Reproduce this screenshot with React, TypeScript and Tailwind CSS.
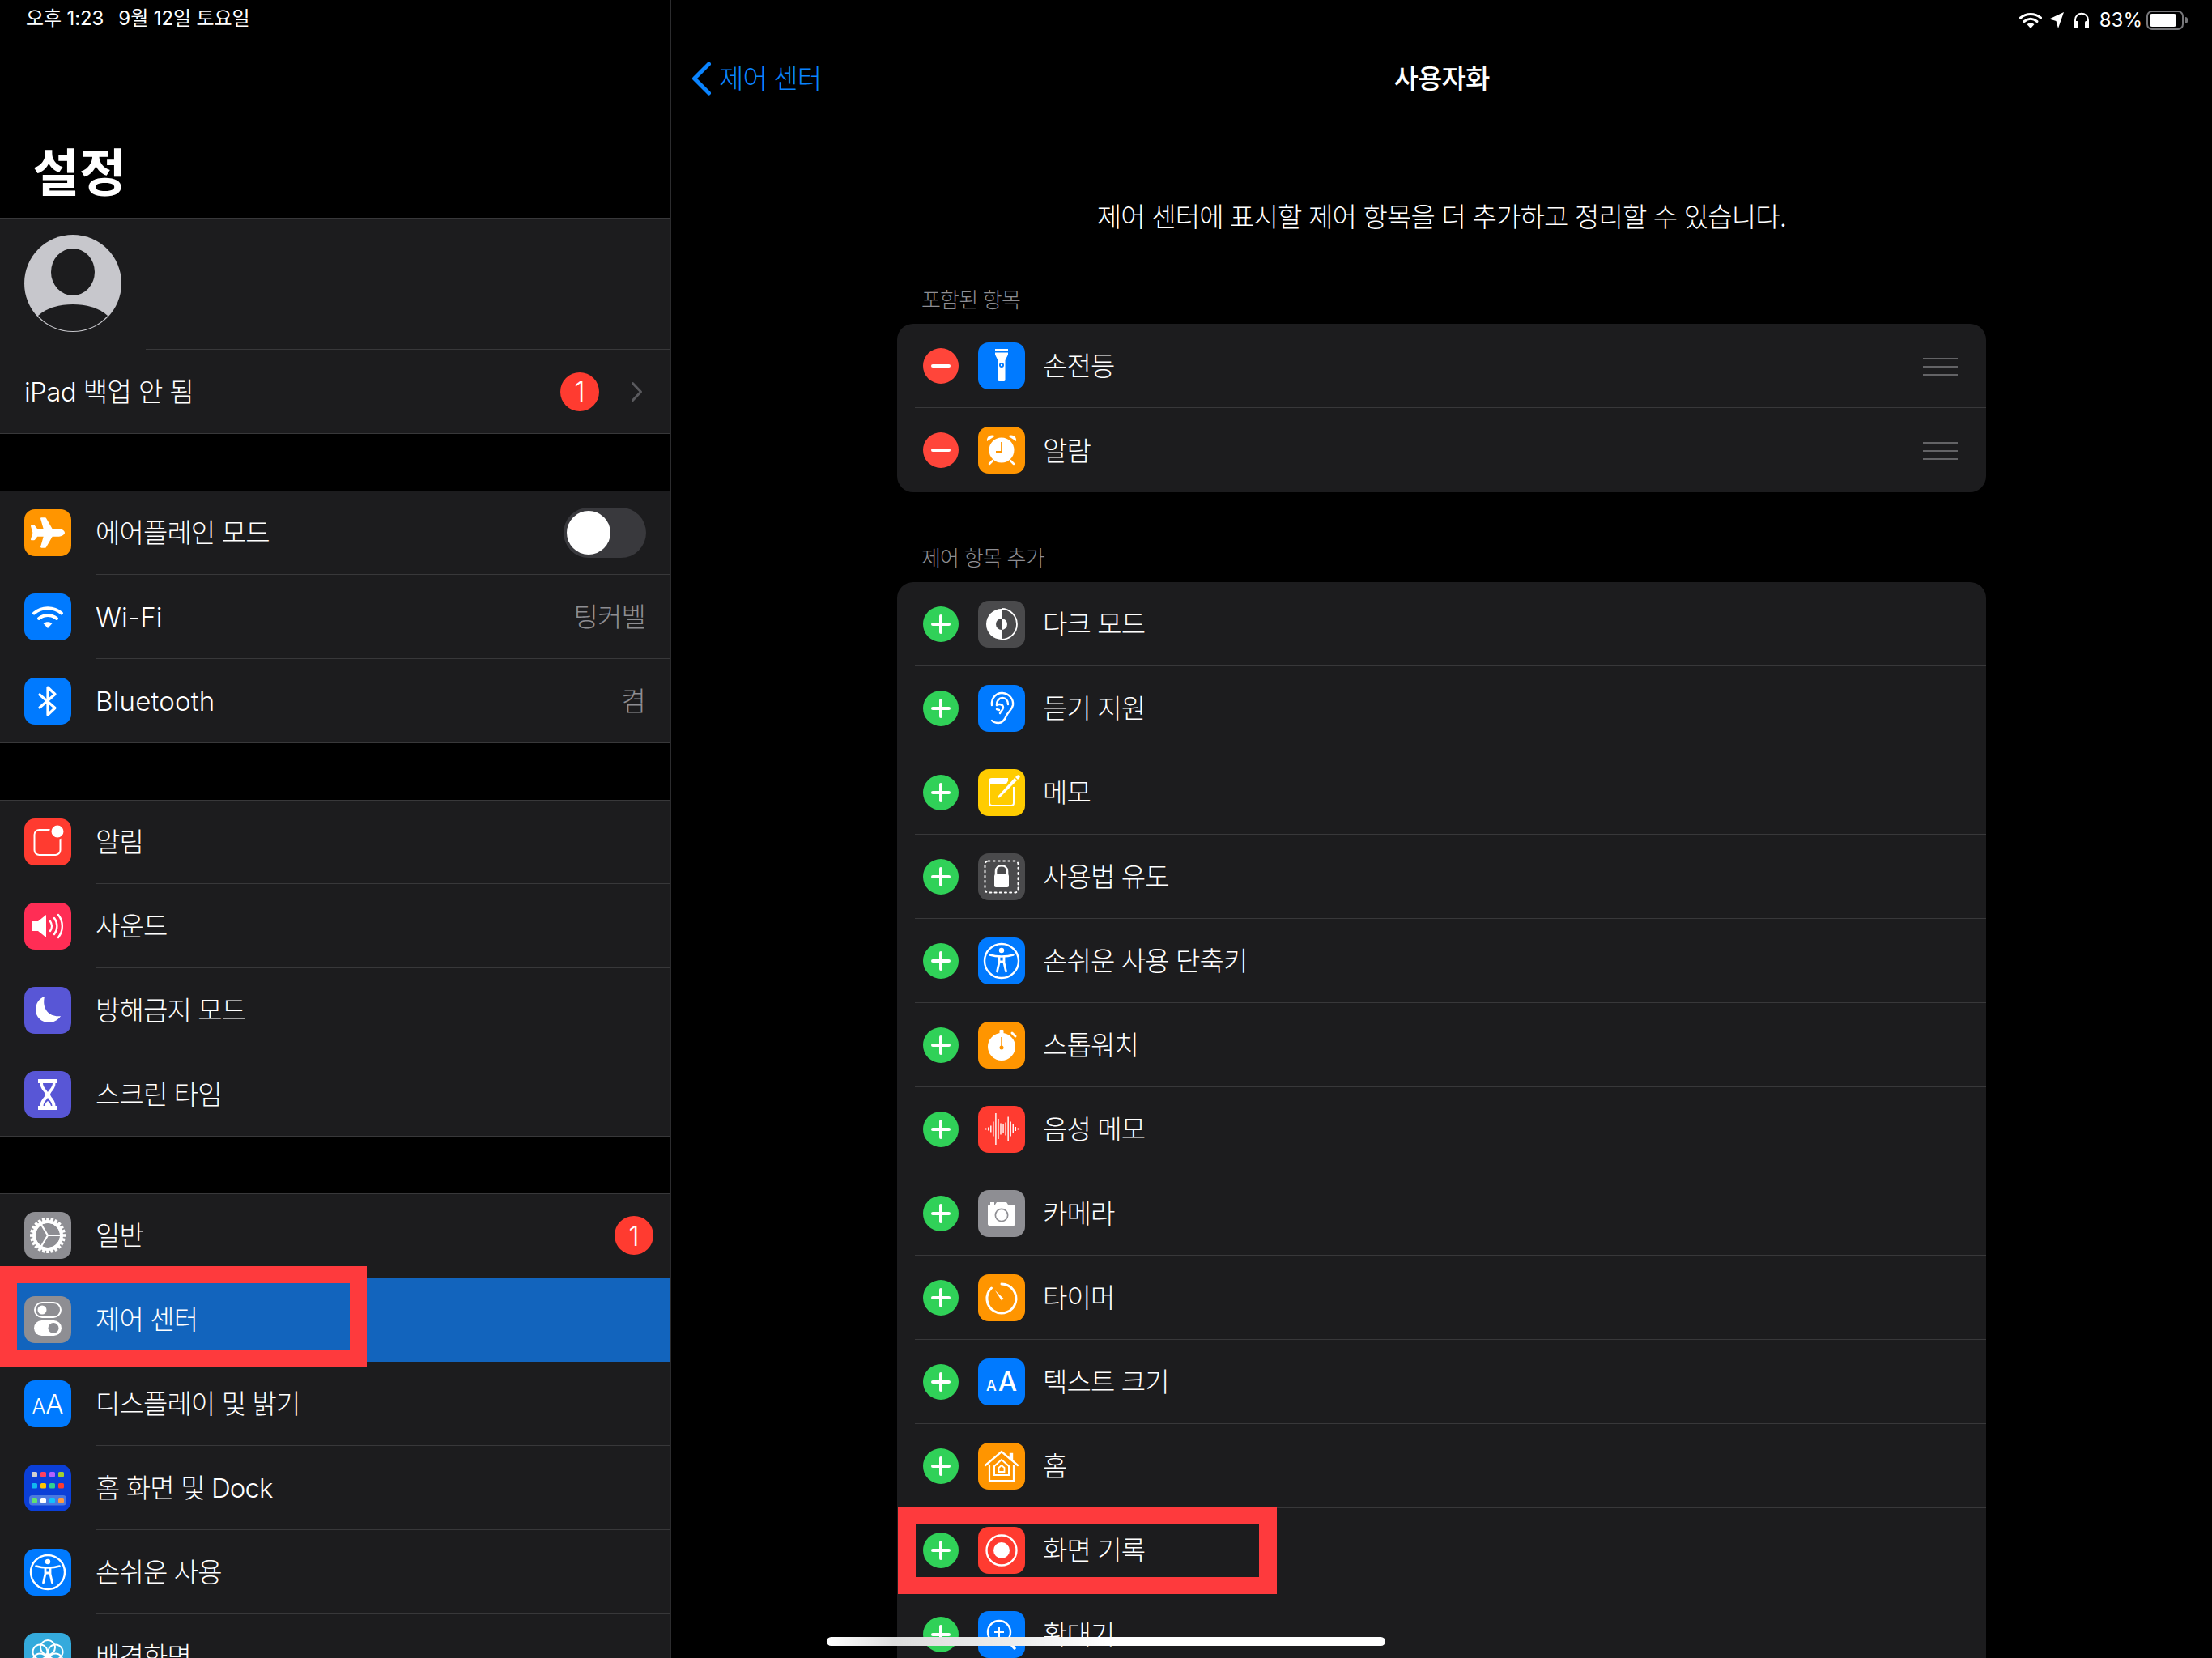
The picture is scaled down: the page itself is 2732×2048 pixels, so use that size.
import React from "react";
import { FaPlane } from "react-icons/fa";

const W = "#fff";
function S({ children, className = "" }: { children: React.ReactNode; className?: string }) {
  return <svg viewBox="0 0 58 58" className={`block h-[58px] w-[58px] ${className}`}>{children}</svg>;
}
function Tile({ bg, children }: { bg: string; children: React.ReactNode }) {
  return <div className={`flex h-[58px] w-[58px] shrink-0 items-center justify-center overflow-hidden rounded-[13px] ${bg}`}>{children}</div>;
}

const WifiI = () => (
  <S>
    <path d="M12 24.5C21.5 16 36.5 16 46 24.5" fill="none" stroke={W} strokeWidth="4" strokeLinecap="round" />
    <path d="M18 31C24.5 25.5 33.5 25.5 40 31" fill="none" stroke={W} strokeWidth="4" strokeLinecap="round" />
    <path d="M23.5 37C27 34.5 31 34.5 34.5 37L29 43Z" fill={W} />
  </S>
);
const BtI = () => (
  <S>
    <path d="M19 21L38 37.5L29 46V12L38 20.5L19 37" fill="none" stroke={W} strokeWidth="3.2" strokeLinejoin="round" strokeLinecap="round" />
  </S>
);
const NotifI = () => (
  <S>
    <rect x="12.5" y="14" width="32" height="31" rx="6" fill="none" stroke={W} strokeWidth="2" />
    <circle cx="41" cy="16" r="10" fill="#ff3b30" />
    <circle cx="41" cy="16" r="7.5" fill={W} />
  </S>
);
const SoundI = () => (
  <S>
    <path d="M10 23H17L27 15V43L17 35H10Z" fill={W} />
    <path d="M32 23C34.5 26.5 34.5 31.5 32 35" fill="none" stroke={W} strokeWidth="2.4" strokeLinecap="round" />
    <path d="M37 19C41.5 25 41.5 33 37 39" fill="none" stroke={W} strokeWidth="2.4" strokeLinecap="round" />
    <path d="M42 15C48.5 23.5 48.5 34.5 42 43" fill="none" stroke={W} strokeWidth="2.4" strokeLinecap="round" />
  </S>
);
const MoonI = () => (
  <S>
    <path d="M25 12C18 14.500 14 21 14 28C14 37.500 21.500 44 30 44C36 44 41.500 41.500 45 36C33 38 21 29 25 12Z" fill={W} />
  </S>
);
const HourI = () => (
  <S>
    <path d="M17 10H41V15H38.500C38.500 22 33 25 32 29C33 33 38.500 36 38.500 43H41V48H17V43H19.500C19.500 36 25 33 26 29C25 25 19.500 22 19.500 15H17Z" fill={W} />
    <path d="M23 15H35C35 19 31 23 29 26C27 23 23 19 23 15Z" fill="#5856d6" />
    <path d="M29 33C31 36 34 38 34.500 43H23.500C24 38 27 36 29 33Z" fill="#5856d6" />
    <path d="M25 43C26 39.500 28 38 29 37C30 38 32 39.500 33 43Z" fill={W} />
  </S>
);
const GearI = () => (
  <S>
    {Array.from({ length: 24 }).map((_, i) => (
      <rect key={i} x="27.200" y="7" width="3.600" height="7" fill={W} transform={`rotate(${i * 15} 29 29)`} />
    ))}
    <circle cx="29" cy="29" r="17" fill="none" stroke={W} strokeWidth="4" />
    <path d="M29 29H46M29 29L20 14M29 29L20 44" stroke={W} strokeWidth="2.200" fill="none" />
  </S>
);
const ControlsI = () => (
  <S>
    <rect x="13" y="8" width="32" height="18" rx="9" fill="none" stroke={W} strokeWidth="2" />
    <circle cx="22" cy="17" r="5.500" fill={W} />
    <rect x="12" y="30" width="34" height="19" rx="9.500" fill={W} />
    <circle cx="36" cy="39.500" r="6.500" fill="#8e8e93" />
  </S>
);
const AccessI = () => (
  <S>
    <circle cx="29" cy="29" r="21" fill="none" stroke={W} strokeWidth="2.400" />
    <circle cx="29" cy="16" r="3.200" fill={W} />
    <path d="M14.500 21.500C19 23 24 23.500 29 23.500C34 23.500 39 23 43.500 21.500" fill="none" stroke={W} strokeWidth="2.600" strokeLinecap="round" />
    <path d="M26 24V31L23.500 42M32 24V31L34.500 42M26 30H32" fill="none" stroke={W} strokeWidth="2.800" strokeLinecap="round" />
  </S>
);
const HomeScreenI = () => {
  const a = ["#d0d0d0", "#ff4060", "#b060ff", "#a0d030"];
  const b = ["#10b8f0", "#ffc400", "#30d090", "#ff3b30"];
  const c = ["#60e070", "#ffffff", "#10c0ff", "#ff9a40"];
  return (
    <S>
      {a.map((f, i) => <rect key={f} x={9 + i * 11} y="9" width="7" height="6.500" rx="1.500" fill={f} />)}
      {b.map((f, i) => <rect key={f} x={9 + i * 11} y="23" width="7" height="6.500" rx="1.500" fill={f} />)}
      <rect x="6" y="38" width="46" height="12.500" rx="4" fill="#4a78e0" />
      {c.map((f, i) => <rect key={f} x={9 + i * 11} y="41" width="7" height="6.500" rx="1.500" fill={f} />)}
    </S>
  );
};
const WallI = () => (
  <S>
    {[0, 60, 120, 180, 240, 300].map((r) => (
      <circle key={r} cx="29" cy="18" r="9" fill="none" stroke={W} strokeWidth="2" transform={`rotate(${r} 29 29)`} />
    ))}
    <circle cx="29" cy="29" r="4" fill={W} />
  </S>
);
const TorchI = () => (
  <S>
    <path d="M21 8H37V10H21Z" fill={W} />
    <path d="M21 12.500H37V15L33.500 22V46C33.500 47 33 48 32 48H26C25 48 24.500 47 24.500 46V22L21 15Z" fill={W} />
    <circle cx="29" cy="28" r="3" fill="#007aff" />
    <circle cx="29" cy="28" r="1.200" fill={W} />
  </S>
);
const AlarmI = () => (
  <S>
    <circle cx="29" cy="29" r="15.500" fill={W} />
    <path d="M11 18C10 12 16 8.500 21 11.500Z" fill={W} />
    <path d="M47 18C48 12 42 8.500 37 11.500Z" fill={W} />
    <path d="M18 42L14 46M40 42L44 46" stroke={W} strokeWidth="2.500" strokeLinecap="round" />
    <path d="M29 19V31H22" fill="none" stroke="#ff9500" strokeWidth="1.800" />
  </S>
);
const DarkI = () => (
  <S>
    <path d="M29 10A19 19 0 0 0 29 48Z" fill={W} />
    <path d="M29 10A19 19 0 0 1 29 48" fill="none" stroke={W} strokeWidth="1.800" />
    <path d="M29 22A7 7 0 0 0 29 36Z" fill="#4a4a4c" />
    <path d="M29 22A7 7 0 0 1 29 36Z" fill={W} />
  </S>
);
const EarI = () => (
  <S>
    <path d="M17 25C16 16 23 9.500 30 10C38 10.500 44 17 43 25C42 31 37 33 35 38C33 43 30 47 25 47C22 47 19 46 17 44" fill="none" stroke={W} strokeWidth="2.400" strokeLinecap="round" />
    <path d="M23 25C22.500 20 26 16 30 16C34 16 37 19 37 24" fill="none" stroke={W} strokeWidth="2.400" strokeLinecap="round" />
    <path d="M23 25C26 23 31 24 31 28C31 31 28 32 27 35M23 30L26 31" fill="none" stroke={W} strokeWidth="2.400" strokeLinecap="round" />
  </S>
);
const MemoI = () => (
  <S>
    <path d="M37 12H17C15 12 14 13 14 15V42C14 44 15 45 17 45H41C43 45 44 44 44 42V22" fill="none" stroke={W} strokeWidth="2" />
    <path d="M14 13H38L35 18H14Z" fill={W} />
    <path d="M25 33L45 11L48 14L27 35L24 36Z" fill={W} />
    <path d="M46 10L48 8C49 7 50 7 51 8C52 9 52 10 51 11L49 13Z" fill={W} />
  </S>
);
const LockI = () => (
  <S>
    <rect x="8.500" y="9.500" width="41" height="39" rx="4" fill="none" stroke={W} strokeWidth="2" strokeDasharray="2 4.200" strokeLinecap="round" />
    <path d="M22 27V22C22 13 36 13 36 22V27" fill="none" stroke={W} strokeWidth="2.600" />
    <rect x="20" y="26" width="18" height="16" rx="2" fill={W} />
  </S>
);
const StopI = () => (
  <S>
    <circle cx="29" cy="31" r="17" fill={W} />
    <rect x="26.500" y="10" width="5" height="6" rx="1" fill={W} />
    <path d="M42 14L46 18" stroke={W} strokeWidth="3" strokeLinecap="round" />
    <path d="M29 19V32" stroke="#ff9500" strokeWidth="1.500" />
    <circle cx="29" cy="32" r="2.500" fill="#ff9500" />
  </S>
);
const WaveI = () => {
  const h = [2, 4, 8, 18, 39, 25, 14, 11, 16, 30, 18, 11, 5, 2];
  return (
    <S>
      {h.map((v, i) => <rect key={i} x={9 + i * 3.050} y={28.500 - v / 2} width="1.400" height={v} fill={W} />)}
    </S>
  );
};
const CamI = () => (
  <S>
    <path d="M12 20C12 18.500 13 18 14 18H21L23 15H35L37 18H44C45 18 46 18.500 46 20V42C46 43 45 44 44 44H14C13 44 12 43 12 42Z" fill={W} />
    <rect x="15" y="15" width="5" height="3" fill={W} />
    <circle cx="29" cy="31" r="8.500" fill="#8e8e93" />
    <circle cx="29" cy="31" r="6.800" fill={W} />
  </S>
);
const TimerI = () => (
  <S>
    <path d="M29 12A18 18 0 1 1 16.500 17" fill="none" stroke={W} strokeWidth="3" strokeLinecap="round" />
    <path d="M21 20L31.500 30L29 32.500Z" fill={W} />
  </S>
);
const HomeI = () => (
  <S>
    <path d="M9 28L29 11L40 20.500V14H42V22L49 28" fill="none" stroke={W} strokeWidth="2.400" strokeLinecap="round" />
    <path d="M14 27V47H44V27" fill="none" stroke={W} strokeWidth="2.200" />
    <path d="M20 29L29 21L38 29V40H20Z" fill="none" stroke={W} strokeWidth="2" />
    <path d="M25.500 31L29 28L32.500 31V36H25.500Z" fill="none" stroke={W} strokeWidth="1.800" />
  </S>
);
const RecI = () => (
  <S>
    <circle cx="29" cy="29" r="18.500" fill="none" stroke={W} strokeWidth="2.400" />
    <circle cx="29" cy="29" r="10" fill={W} />
  </S>
);
const MagI = () => (
  <S>
    <circle cx="26" cy="26" r="14" fill="none" stroke={W} strokeWidth="2.400" />
    <path d="M20 26H32M26 20V32" stroke={W} strokeWidth="2" />
    <path d="M37 37L45 46" stroke={W} strokeWidth="3.400" strokeLinecap="round" />
  </S>
);

function Badge() {
  return (
    <div className="flex h-[48px] w-[48px] shrink-0 items-center justify-center rounded-full bg-[#ff3b30] text-[34px] font-light text-white">1</div>
  );
}

function SideRow({ icon, label, right, last, selected, latin, bare }: { icon?: React.ReactNode; label: string; right?: React.ReactNode; last?: boolean; selected?: boolean; latin?: boolean; bare?: boolean }) {
  return (
    <div className={`flex h-[104px] items-center pl-[30px] ${selected ? "bg-[#1264bd]" : ""} ${last ? "border-b border-[#38383a]" : ""}`}>
      {icon}
      <div className={`ml-[30px] flex h-full flex-1 items-center justify-between pr-[21px] ${last || selected || bare ? "" : "border-b border-[#38383a]"}`}>
        <span className={`pt-[2px] text-[33px] font-light text-white ${latin ? "tracking-[0.2px]" : "tracking-[-0.9px]"}`}>{label}</span>
        {right}
      </div>
    </div>
  );
}

function Section({ children }: { children: React.ReactNode }) {
  return <section className="mb-[70px] bg-[#1c1c1e] shadow-[inset_0_1px_0_#38383a]">{children}</section>;
}

function AddBtn({ remove }: { remove?: boolean }) {
  return (
    <div className={`relative flex h-[44px] w-[44px] shrink-0 items-center justify-center rounded-full ${remove ? "bg-[#ff453a]" : "bg-[#30d158]"}`}>
      <div className="h-[4px] w-[24px] rounded-full bg-white" />
      {!remove && <div className="absolute h-[24px] w-[4px] rounded-full bg-white" />}
    </div>
  );
}

function CtlRow({ icon, label, remove, last }: { icon: React.ReactNode; label: string; remove?: boolean; last?: boolean }) {
  return (
    <div className={`ml-[22px] flex h-[104px] items-center pl-[10px] pr-[35px] ${last ? "" : "border-b border-[#38383a]"}`}>
      <AddBtn remove={remove} />
      <div className="ml-[24px]">{icon}</div>
      <span className="ml-[22px] flex-1 pt-[3px] text-[33px] font-light tracking-[-0.9px] text-white">{label}</span>
      {remove && (
        <div className="mt-[2px] flex w-[43px] flex-col gap-[8px]">
          <div className="h-[2px] bg-[#636366]" />
          <div className="h-[2px] bg-[#636366]" />
          <div className="h-[2px] bg-[#636366]" />
        </div>
      )}
    </div>
  );
}

export default function App() {
  return (
    <div className="relative flex h-[2048px] w-[2732px] overflow-hidden bg-black font-[Inter,'Noto_Sans_CJK_KR',sans-serif] text-white">
      <aside className="h-full w-[829px] shrink-0 overflow-hidden border-r border-[#2c2c2e]">
        <div className="flex h-[269px] flex-col justify-between">
          <div className="flex gap-[18px] pl-[32px] pt-[8px] text-[24px] leading-[30px] tracking-[-0.1px]">
            <span>오후 1:23</span>
            <span>9월 12일 토요일</span>
          </div>
          <h1 className="pb-[18px] pl-[40px] text-[63px] font-bold leading-[76px]">설정</h1>
        </div>

        <section className="mb-[70px] bg-[#1c1c1e] shadow-[inset_0_1px_0_#38383a]">
          <div className="flex h-[163px] pl-[30px] pt-[21px]">
            <svg viewBox="0 0 120 120" className="h-[120px] w-[120px] shrink-0">
              <circle cx="60" cy="60" r="60" fill="#c7c7cc" />
              <ellipse cx="60" cy="46" rx="27" ry="29" fill="#1c1c1e" />
              <path d="M17 100C28 90 44 86 60 86C76 86 92 90 103 100A59 59 0 0 1 60 119A59 59 0 0 1 17 100Z" fill="#1c1c1e" />
            </svg>
            <div className="ml-[30px] flex-1 self-end border-b border-[#38383a]" />
          </div>
          <div className="flex h-[104px] items-center justify-between border-b border-[#38383a] pl-[30px] pr-[34px]">
            <span className="pt-[2px] text-[33px] font-light tracking-[-0.6px]">iPad 백업 안 됨</span>
            <div className="flex items-center gap-[39px]">
              <Badge />
              <svg viewBox="0 0 15 26" className="h-[26px] w-[15px]">
                <path d="M2.500 2.500L12.500 13L2.500 23.500" fill="none" stroke="#5a5a5e" strokeWidth="3" strokeLinecap="round" strokeLinejoin="round" />
              </svg>
            </div>
          </div>
        </section>

        <Section>
          <SideRow
            icon={<Tile bg="bg-[#ff9500]"><FaPlane className="h-[42px] w-[42px] text-white" /></Tile>}
            label="에어플레인 모드"
            right={
              <div className="mr-[9px] flex h-[62px] w-[102px] items-center rounded-full bg-[#39393d] pl-[4px]">
                <div className="h-[54px] w-[54px] rounded-full bg-white" />
              </div>
            }
          />
          <SideRow icon={<Tile bg="bg-[#007aff]"><WifiI /></Tile>} label="Wi-Fi" latin right={<span className="mr-[10px] pt-[2px] text-[33px] font-light tracking-[-0.9px] text-[#8e8e93]">팅커벨</span>} />
          <SideRow icon={<Tile bg="bg-[#007aff]"><BtI /></Tile>} label="Bluetooth" latin right={<span className="mr-[10px] pt-[2px] text-[33px] font-light tracking-[-0.9px] text-[#8e8e93]">켬</span>} last />
        </Section>

        <Section>
          <SideRow icon={<Tile bg="bg-[#ff3b30]"><NotifI /></Tile>} label="알림" />
          <SideRow icon={<Tile bg="bg-[#ff2d55]"><SoundI /></Tile>} label="사운드" />
          <SideRow icon={<Tile bg="bg-[#5856d6]"><MoonI /></Tile>} label="방해금지 모드" />
          <SideRow icon={<Tile bg="bg-[#5856d6]"><HourI /></Tile>} label="스크린 타임" last />
        </Section>

        <Section>
          <SideRow icon={<Tile bg="bg-[#8e8e93]"><GearI /></Tile>} label="일반" right={<Badge />} bare />
          <SideRow icon={<Tile bg="bg-[#8e8e93]"><ControlsI /></Tile>} label="제어 센터" selected />
          <SideRow icon={<Tile bg="bg-[#007aff]"><span className="text-[33px] font-light leading-none text-white"><span className="text-[25px]">A</span>A</span></Tile>} label="디스플레이 및 밝기" />
          <SideRow icon={<Tile bg="bg-[#0b3fd8]"><HomeScreenI /></Tile>} label="홈 화면 및 Dock" />
          <SideRow icon={<Tile bg="bg-[#007aff]"><AccessI /></Tile>} label="손쉬운 사용" />
          <SideRow icon={<Tile bg="bg-[#34aadc]"><WallI /></Tile>} label="배경화면" />
        </Section>
      </aside>

      <main className="flex h-full flex-1 flex-col">
        <div className="flex h-[53px] shrink-0 items-start justify-end pr-[30px] pt-[10px]">
          <div className="flex items-center">
            <svg viewBox="0 0 28 20" className="h-[20px] w-[28px]">
              <path d="M1.500 7C8.500 1 19.500 1 26.500 7" fill="none" stroke={W} strokeWidth="3" strokeLinecap="round" />
              <path d="M6 11.500C11 7.500 17 7.500 22 11.500" fill="none" stroke={W} strokeWidth="3" strokeLinecap="round" />
              <path d="M9.500 15C12.500 12.800 15.500 12.800 18.500 15L14 20Z" fill={W} />
            </svg>
            <svg viewBox="0 0 18 20" className="ml-[9px] h-[20px] w-[18px]">
              <path d="M18 0L11 20L8.500 11L0 8.500Z" fill={W} />
            </svg>
            <svg viewBox="0 0 20 20" className="ml-[12px] h-[20px] w-[20px]">
              <path d="M2 14V10C2 -1 18 -1 18 10V14" fill="none" stroke={W} strokeWidth="2" />
              <rect x="1" y="11" width="5" height="9" rx="1.500" fill={W} />
              <rect x="14" y="11" width="5" height="9" rx="1.500" fill={W} />
            </svg>
            <span className="ml-[12px] text-[24px] leading-[30px]">83%</span>
            <div className="ml-[5px] flex h-[24px] w-[46px] items-center rounded-[7px] border-2 border-[#77777a] pl-[2px]">
              <div className="h-[16px] w-[33px] rounded-[3px] bg-white" />
            </div>
            <div className="ml-[2px] h-[8px] w-[3px] rounded-r-full bg-[#77777a]" />
          </div>
        </div>

        <nav className="relative flex h-[88px] shrink-0 items-center justify-center">
          <div className="absolute left-[25px] flex items-center gap-[9px] text-[#0a84ff]">
            <svg viewBox="0 0 25 42" className="h-[42px] w-[25px]">
              <path d="M21.500 3L3.500 21L21.500 39" fill="none" stroke="#0a84ff" strokeWidth="5" strokeLinecap="round" strokeLinejoin="round" />
            </svg>
            <span className="pt-[2px] text-[33px] font-light tracking-[-0.9px]">제어 센터</span>
          </div>
          <h2 className="pt-[2px] text-[33px] font-medium tracking-[-0.8px]">사용자화</h2>
        </nav>

        <p className="mt-[106px] h-[40px] shrink-0 pt-[1px] text-center text-[33px] font-light leading-[40px] tracking-[-0.85px]">제어 센터에 표시할 제어 항목을 더 추가하고 정리할 수 있습니다.</p>

        <div className="mx-[279px] mt-[63px] shrink-0">
          <div className="mb-[10px] h-[40px] pl-[30px] pt-[1px] text-[26px] font-light leading-[40px] tracking-[-0.8px] text-[#8e8e93]">포함된 항목</div>
          <div className="overflow-hidden rounded-[20px] bg-[#1c1c1e]">
            <CtlRow remove icon={<Tile bg="bg-[#007aff]"><TorchI /></Tile>} label="손전등" />
            <CtlRow remove icon={<Tile bg="bg-[#ff9500]"><AlarmI /></Tile>} label="알람" last />
          </div>

          <div className="mb-[10px] mt-[61px] h-[40px] pl-[30px] pt-[1px] text-[26px] font-light leading-[40px] tracking-[-0.8px] text-[#8e8e93]">제어 항목 추가</div>
          <div className="rounded-[20px] bg-[#1c1c1e]">
            <CtlRow icon={<Tile bg="bg-[#4a4a4c]"><DarkI /></Tile>} label="다크 모드" />
            <CtlRow icon={<Tile bg="bg-[#007aff]"><EarI /></Tile>} label="듣기 지원" />
            <CtlRow icon={<Tile bg="bg-[#ffcc00]"><MemoI /></Tile>} label="메모" />
            <CtlRow icon={<Tile bg="bg-[#4a4a4c]"><LockI /></Tile>} label="사용법 유도" />
            <CtlRow icon={<Tile bg="bg-[#007aff]"><AccessI /></Tile>} label="손쉬운 사용 단축키" />
            <CtlRow icon={<Tile bg="bg-[#ff9500]"><StopI /></Tile>} label="스톱워치" />
            <CtlRow icon={<Tile bg="bg-[#ff3b30]"><WaveI /></Tile>} label="음성 메모" />
            <CtlRow icon={<Tile bg="bg-[#8e8e93]"><CamI /></Tile>} label="카메라" />
            <CtlRow icon={<Tile bg="bg-[#ff9500]"><TimerI /></Tile>} label="타이머" />
            <CtlRow icon={<Tile bg="bg-[#007aff]"><span className="flex items-baseline gap-[2px] font-medium leading-none text-white"><span className="text-[18px]">A</span><span className="text-[33px]">A</span></span></Tile>} label="텍스트 크기" />
            <CtlRow icon={<Tile bg="bg-[#ff9500]"><HomeI /></Tile>} label="홈" />
            <CtlRow icon={<Tile bg="bg-[#ff3b30]"><RecI /></Tile>} label="화면 기록" />
            <CtlRow icon={<Tile bg="bg-[#007aff]"><MagI /></Tile>} label="확대기" />
          </div>
        </div>
      </main>

      <div className="absolute left-0 top-[1564px] h-[124px] w-[453px] border-[21px] border-[#fe3a3d]" />
      <div className="absolute left-[1109px] top-[1861px] h-[108px] w-[468px] border-x-[22px] border-y-[21px] border-[#fe3a3d]" />
      <div className="absolute left-[1021px] top-[2022px] h-[11px] w-[690px] rounded-full bg-[linear-gradient(90deg,#fff_0%,#ddd_12%,#eee_35%,#fff_50%)]" />
    </div>
  );
}
